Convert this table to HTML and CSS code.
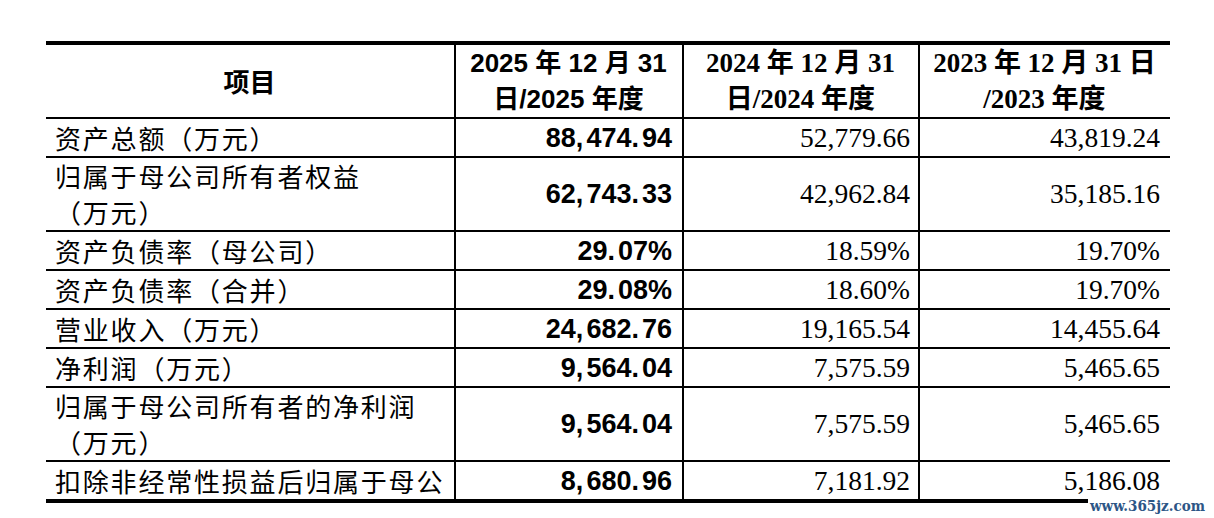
FILE: index.html
```html
<!DOCTYPE html>
<html lang="zh-CN">
<head>
<meta charset="utf-8">
<title>主要财务数据</title>
<link rel="stylesheet" href="styles.css">
</head>
<body>
<div class="page">
  <table class="fin">
    <colgroup>
      <col class="w1"><col class="w2"><col class="w3"><col class="w4">
    </colgroup>
    <thead>
      <tr class="two">
        <th class="h-item">项目</th>
        <th class="h-sans">2025 年 12 月 31<br>日/2025 年度</th>
        <th class="h-serif">2024 年 12 月 31<br>日/2024 年度</th>
        <th class="h-serif last">2023 年 12 月 31 日<br>/2023 年度</th>
      </tr>
    </thead>
    <tbody>
      <tr>
        <td class="label">资产总额（万元）</td>
        <td class="nb">88<span class="sep">,</span>474<span class="sep">.</span>94</td>
        <td class="n">52,779.66</td>
        <td class="n last">43,819.24</td>
      </tr>
      <tr class="two">
        <td class="label">归属于母公司所有者权益<br>（万元）</td>
        <td class="nb">62<span class="sep">,</span>743<span class="sep">.</span>33</td>
        <td class="n">42,962.84</td>
        <td class="n last">35,185.16</td>
      </tr>
      <tr>
        <td class="label">资产负债率（母公司）</td>
        <td class="nb">29<span class="sep">.</span>07%</td>
        <td class="n">18.59%</td>
        <td class="n last">19.70%</td>
      </tr>
      <tr>
        <td class="label">资产负债率（合并）</td>
        <td class="nb">29<span class="sep">.</span>08%</td>
        <td class="n">18.60%</td>
        <td class="n last">19.70%</td>
      </tr>
      <tr>
        <td class="label">营业收入（万元）</td>
        <td class="nb">24<span class="sep">,</span>682<span class="sep">.</span>76</td>
        <td class="n">19,165.54</td>
        <td class="n last">14,455.64</td>
      </tr>
      <tr>
        <td class="label">净利润（万元）</td>
        <td class="nb">9<span class="sep">,</span>564<span class="sep">.</span>04</td>
        <td class="n">7,575.59</td>
        <td class="n last">5,465.65</td>
      </tr>
      <tr class="two">
        <td class="label">归属于母公司所有者的净利润<br>（万元）</td>
        <td class="nb">9<span class="sep">,</span>564<span class="sep">.</span>04</td>
        <td class="n">7,575.59</td>
        <td class="n last">5,465.65</td>
      </tr>
      <tr class="end">
        <td class="label">扣除非经常性损益后归属于母公</td>
        <td class="nb">8<span class="sep">,</span>680<span class="sep">.</span>96</td>
        <td class="n">7,181.92</td>
        <td class="n last">5,186.08</td>
      </tr>
    </tbody>
  </table>
  <div class="watermark">www.365jz.com</div>
</div>
</body>
</html>
```

FILE: styles.css
```css
html, body {
  margin: 0;
  padding: 0;
  background: #ffffff;
}

.page {
  position: relative;
  width: 1214px;
  height: 518px;
  overflow: hidden;
  padding: 41px 0 0 46px;
  box-sizing: border-box;
  color: #000000;
}

.fin {
  border-collapse: separate;
  border-spacing: 0;
  table-layout: fixed;
  width: 1124px;
  border-top: 4px solid #000000;
}

.w1 { width: 410px; }
.w2 { width: 228px; }
.w3 { width: 236px; }
.w4 { width: 250px; }

.fin th,
.fin td {
  box-sizing: border-box;
  padding: 1px 10px 0 9px;
  line-height: 36px;
  vertical-align: middle;
  border-right: 2px solid #000000;
  border-bottom: 2px solid #000000;
  white-space: nowrap;
  overflow: hidden;
}

.fin .two th,
.fin .two td {
  padding-top: 0;
  padding-bottom: 0;
}

.fin .last {
  border-right: none;
}

.fin .end td {
  border-bottom: 4px solid #000000;
}

.fin th {
  font-weight: 700;
  text-align: center;
}

.h-item {
  font-family: "Noto Sans CJK SC", sans-serif;
  font-size: 26px;
}

.h-sans {
  font-family: "Liberation Sans", "Noto Sans CJK SC", sans-serif;
  font-size: 26px;
}

.h-serif {
  font-family: "Liberation Serif", "Noto Sans CJK SC", serif;
  font-size: 27px;
}

.label {
  font-family: "Noto Sans CJK SC", sans-serif;
  font-size: 26px;
  letter-spacing: 1.8px;
  text-align: left;
}

.nb {
  font-family: "Liberation Sans", Arial, sans-serif;
  font-weight: 700;
  font-size: 27px;
  text-align: right;
}

.nb .sep {
  margin-right: 3px;
}

.n {
  font-family: "Liberation Serif", "Times New Roman", serif;
  font-size: 27.5px;
  text-align: right;
}

.fin td.n {
  padding-right: 8px;
}

.fin td.n.last {
  padding-right: 10px;
}

.watermark {
  position: absolute;
  left: 1088px;
  top: 496px;
  padding: 0 2px 0 2px;
  background: #ffffff;
  font-family: "DejaVu Serif", serif;
  font-stretch: condensed;
  font-weight: 700;
  font-size: 15px;
  line-height: 20px;
  color: #2d5686;
  white-space: nowrap;
}
```
